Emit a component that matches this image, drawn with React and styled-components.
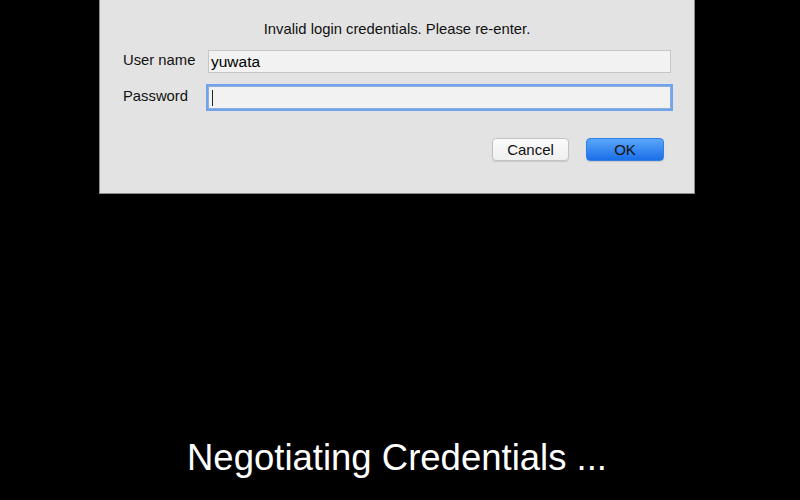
import styled, { createGlobalStyle } from "styled-components";

const GlobalStyle = createGlobalStyle`
  html, body {
    margin: 0;
    padding: 0;
    background: #000;
  }
  body {
    font-family: "Liberation Sans", Arial, sans-serif;
  }
`;

function App() {
  return (
    <Page>
      <GlobalStyle />
      <Dialog>
        <Message>Invalid login credentials. Please re-enter.</Message>
        <Form>
          <Row>
            <Label>User name</Label>
            <Field>yuwata</Field>
          </Row>
          <Row>
            <Label>Password</Label>
            <Field focused>
              <Caret />
            </Field>
          </Row>
        </Form>
        <Buttons>
          <Button>Cancel</Button>
          <Button primary>OK</Button>
        </Buttons>
      </Dialog>
      <Status>Negotiating Credentials ...</Status>
    </Page>
  );
}

export default App;

const Page = styled.div`
  width: 800px;
  height: 500px;
  display: flex;
  flex-direction: column;
  background: #000;
`;

const Dialog = styled.div`
  margin-left: 99px;
  width: 594px;
  height: 193px;
  background: #e3e3e3;
  border: 1px solid #8d8d8d;
  border-top: none;
  display: flex;
  flex-direction: column;
`;

const Message = styled.div`
  margin-top: 21px;
  text-align: center;
  font-size: 14.8px;
  line-height: 16px;
  color: #111;
`;

const Form = styled.div`
  margin-top: 13px;
  padding: 0 23px;
  display: flex;
  flex-direction: column;
  gap: 13px;
`;

const Row = styled.div`
  display: flex;
  align-items: center;
`;

const Label = styled.div`
  width: 85px;
  font-size: 14.8px;
  color: #111;
  margin-top: -3px;
`;

const Field = styled.div`
  flex: 1;
  height: 21px;
  display: flex;
  align-items: center;
  padding: 0 2px;
  background: #f2f2f2;
  border: 1px solid ${(p) => (p.focused ? "#8eaed6" : "#c6c6c6")};
  box-shadow: ${(p) => (p.focused ? "0 0 0 2px #6fa3ef" : "none")};
  font-size: 15.5px;
  color: #000;
`;

const Caret = styled.span`
  width: 1px;
  height: 16px;
  margin-left: 1px;
  background: #222;
`;

const Buttons = styled.div`
  margin-top: 29px;
  padding-right: 30px;
  display: flex;
  justify-content: flex-end;
  gap: 17px;
`;

const Button = styled.div`
  width: ${(p) => (p.primary ? "78px" : "77px")};
  height: 23px;
  box-sizing: border-box;
  display: flex;
  align-items: center;
  justify-content: center;
  border-radius: 4px;
  font-size: 15px;
  color: #111;
  background: ${(p) =>
    p.primary
      ? "linear-gradient(#5aa6fa, #1a6fe8)"
      : "linear-gradient(#fbfbfb, #f0f0f0)"};
  border: 1px solid ${(p) => (p.primary ? "#2f7fe6" : "#c3c3c3")};
  box-shadow: 0 1px 1px rgba(0, 0, 0, 0.12);
`;

const Status = styled.div`
  margin-top: auto;
  margin-bottom: 22px;
  padding-right: 6px;
  text-align: center;
  font-size: 36.5px;
  line-height: 40px;
  color: #fff;
`;
